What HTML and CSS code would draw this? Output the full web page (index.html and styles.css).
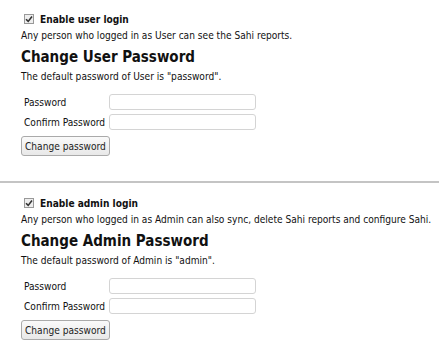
FILE: index.html
```html
<!DOCTYPE html>
<html lang="en">

<head>
  <title>Sahi Users</title>
  <meta charset="utf-8" />
  <link rel="stylesheet" href="styles.css">
</head>

<body>
  <div class="section">
    <label class="enable">
      <span class="check"><svg viewBox="0 0 10 10" width="10" height="10"><path d="M2 5.2 L4.2 7.4 L8 2.6" fill="none" stroke="#333" stroke-width="1.6"/></svg></span>
      Enable user login
    </label>
    <div class="note">Any person who logged in as User can see the Sahi reports.</div>
    <h2>Change User Password</h2>
    <div class="note">The default password of User is "password".</div>
    <table class="pwd">
      <tr>
        <td>Password</td>
        <td><input type="password" class="field"></td>
      </tr>
      <tr>
        <td>Confirm Password</td>
        <td><input type="password" class="field"></td>
      </tr>
    </table>
    <button class="btn">Change password</button>
  </div>
  <hr class="sep">
  <div class="section">
    <label class="enable">
      <span class="check"><svg viewBox="0 0 10 10" width="10" height="10"><path d="M2 5.2 L4.2 7.4 L8 2.6" fill="none" stroke="#333" stroke-width="1.6"/></svg></span>
      Enable admin login
    </label>
    <div class="note">Any person who logged in as Admin can also sync, delete Sahi reports and configure Sahi.</div>
    <h2>Change Admin Password</h2>
    <div class="note">The default password of Admin is "admin".</div>
    <table class="pwd">
      <tr>
        <td>Password</td>
        <td><input type="password" class="field"></td>
      </tr>
      <tr>
        <td>Confirm Password</td>
        <td><input type="password" class="field"></td>
      </tr>
    </table>
    <button class="btn">Change password</button>
  </div>
</body>

</html>
```

FILE: styles.css
```css
html,
body {
  margin: 0;
  background: white;
}

body {
  font: 10.1px "DejaVu Sans Condensed", "DejaVu Sans", sans-serif;
  color: #111;
  padding-top: 14px;
}

.section {
  padding: 0 4px 0 21px;
}

.enable {
  display: flex;
  align-items: center;
  gap: 6px;
  margin-left: 3px;
  font-weight: bold;
  height: 10px;
}

.check {
  display: block;
  width: 8px;
  height: 8px;
  border: 1px solid #999;
  background: #eee;
  position: relative;
}

.check svg {
  position: absolute;
  left: -1px;
  top: -1px;
}

.note {
  margin-top: 5px;
  line-height: 13px;
  white-space: nowrap;
}

h2 {
  font-size: 15px;
  margin: 6px 0 0;
  line-height: 18px;
}

h2 + .note {
  margin-top: 4px;
}

.pwd {
  border-spacing: 0 4px;
  margin: 7px 0 0;
}

.pwd td {
  padding: 0;
}

.pwd td:first-child {
  padding: 0 4px 0 3px;
}

.field {
  box-sizing: border-box;
  width: 147px;
  height: 16px;
  border: 1px solid #d4d4d4;
  border-radius: 3px;
  margin: 0;
  padding: 0 3px;
  display: block;
}

.btn {
  font: inherit;
  color: #222;
  height: 20px;
  margin-top: 2px;
  padding: 0 3px;
  border: 1px solid #aaa;
  border-radius: 3px;
  background: linear-gradient(#fafafa, #e8e8e8);
}

.sep {
  margin: 25px 0 15px;
  border: 0;
  border-top: 2px solid #c4c4c4;
}
```
